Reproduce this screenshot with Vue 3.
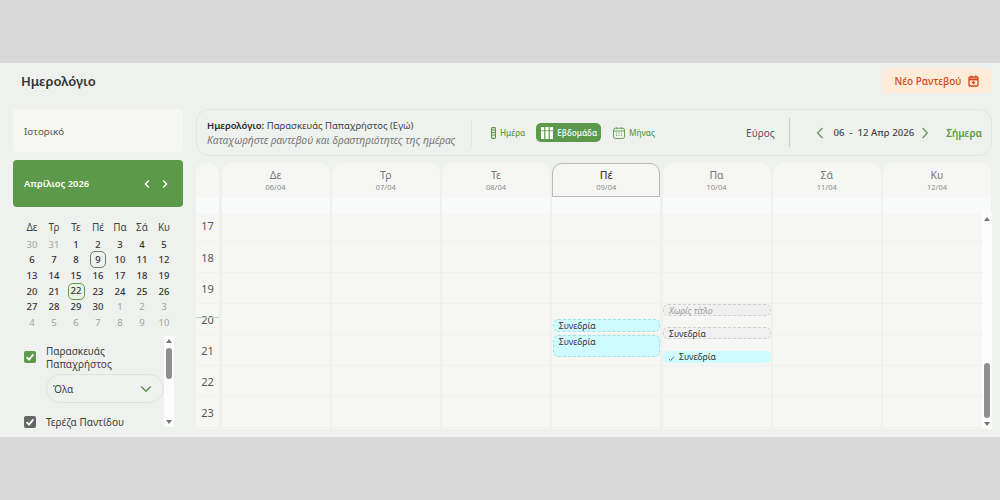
<script setup>
const dayNames = ['Δε', 'Τρ', 'Τε', 'Πέ', 'Πα', 'Σά', 'Κυ']

// μικρό ημερολόγιο
const monthDays = [
  [30, 31, 1, 2, 3, 4, 5],
  [6, 7, 8, 9, 10, 11, 12],
  [13, 14, 15, 16, 17, 18, 19],
  [20, 21, 22, 23, 24, 25, 26],
  [27, 28, 29, 30, 1, 2, 3],
  [4, 5, 6, 7, 8, 9, 10],
]

const isOther = (rowIndex, day) => (rowIndex === 0 && day > 20) || (rowIndex >= 4 && day < 20)

const hours = [17, 18, 19, 20, 21, 22, 23]

const weekDays = [
  { name: 'Δε', date: '06/04', events: [] },
  { name: 'Τρ', date: '07/04', events: [] },
  { name: 'Τε', date: '08/04', events: [] },
  {
    name: 'Πέ',
    date: '09/04',
    current: true,
    events: [
      { title: 'Συνεδρία', top: 106, height: 13, kind: 'cyan dashed' },
      { title: 'Συνεδρία', top: 122, height: 22, kind: 'cyan dashed' },
    ],
  },
  {
    name: 'Πα',
    date: '10/04',
    events: [
      { title: 'Χωρίς τίτλο', top: 91, height: 12, kind: 'gray dashed italic' },
      { title: 'Συνεδρία', top: 114, height: 12, kind: 'gray dashed' },
      { title: 'Συνεδρία', top: 138, height: 12, kind: 'cyan', done: true },
    ],
  },
  { name: 'Σά', date: '11/04', events: [] },
  { name: 'Κυ', date: '12/04', events: [] },
]
</script>

<template>
  <div class="page">
    <header class="top">
      <h1>Ημερολόγιο</h1>
      <button class="new-btn">
        Νέο Ραντεβού
        <svg width="11" height="12" viewBox="0 0 11 12" fill="none" stroke="#d2491b" stroke-width="1.3">
          <rect x="1" y="2" width="9" height="9" rx="1" />
          <path d="M1 4.4h9" stroke-width="2" />
          <path d="M3.2 .4v2M7.8 .4v2M5.5 6v3.2M3.9 7.6h3.2" />
        </svg>
      </button>
    </header>

    <div class="content">
      <aside class="side">
        <div class="history">Ιστορικό</div>

        <div class="month-bar">
          <span>Απρίλιος 2026</span>
          <div class="month-arrows">
            <svg width="8" height="10" viewBox="0 0 8 10" fill="none" stroke="#fff" stroke-width="1.5"><path d="M5.8 1.5 2.4 5l3.4 3.5" /></svg>
            <svg width="8" height="10" viewBox="0 0 8 10" fill="none" stroke="#fff" stroke-width="1.5"><path d="M2.2 1.5 5.6 5 2.2 8.5" /></svg>
          </div>
        </div>

        <div class="mini-cal">
          <span v-for="d in dayNames" :key="d" class="mini-head">{{ d }}</span>
          <template v-for="(row, r) in monthDays" :key="r">
            <span
              v-for="(day, c) in row"
              :key="c"
              class="mini-day"
              :class="{
                other: isOther(r, day),
                selected: r === 1 && c === 3,
                today: r === 3 && c === 2,
              }"
            >{{ day }}</span>
          </template>
        </div>

        <div class="filters">
          <div class="filter-list">
            <div class="filter-row">
              <span class="check green">
                <svg width="10" height="10" viewBox="0 0 10 10" fill="none" stroke="#fff" stroke-width="1.8"><path d="M1.6 5.2 4 7.6 8.4 2.4" /></svg>
              </span>
              <span class="filter-name">Παρασκευάς<br />Παπαχρήστος</span>
            </div>
            <div class="select">
              <span>Όλα</span>
              <svg width="12" height="8" viewBox="0 0 12 8" fill="none" stroke="#5d994b" stroke-width="1.5"><path d="M1.2 1.5 6 6.2l4.8-4.7" /></svg>
            </div>
            <div class="filter-row second">
              <span class="check dark">
                <svg width="10" height="10" viewBox="0 0 10 10" fill="none" stroke="#fff" stroke-width="1.8"><path d="M1.6 5.2 4 7.6 8.4 2.4" /></svg>
              </span>
              <span class="filter-name">Τερέζα Παντίδου</span>
            </div>
          </div>
          <div class="scrollbar small">
            <span class="tri up"></span>
            <span class="thumb"></span>
            <span class="tri down"></span>
          </div>
        </div>
      </aside>

      <main class="main">
        <div class="toolbar">
          <div class="cal-info">
            <div><b>Ημερολόγιο:</b> Παρασκευάς Παπαχρήστος (Εγώ)</div>
            <div class="hint">Καταχωρήστε ραντεβού και δραστηριότητες της ημέρας</div>
          </div>
          <span class="divider"></span>
          <div class="views">
            <span class="view">
              <svg width="5" height="12" viewBox="0 0 5 12" fill="none" stroke="#5d994b" stroke-width="1.1">
                <rect x=".6" y=".6" width="3.8" height="10.8" rx=".6" />
                <path d="M.6 3h3.8M.6 5.5h3.8M.6 8h3.8" />
              </svg>
              Ημέρα
            </span>
            <span class="view active">
              <svg width="12" height="12" viewBox="0 0 12 12" fill="#fff">
                <rect x="0" y="0" width="3.2" height="3.4" />
                <rect x="4.4" y="0" width="3.2" height="3.4" />
                <rect x="8.8" y="0" width="3.2" height="3.4" />
                <rect x="0" y="4.2" width="3.2" height="7.8" />
                <rect x="4.4" y="4.2" width="3.2" height="7.8" />
                <rect x="8.8" y="4.2" width="3.2" height="7.8" />
              </svg>
              Εβδομάδα
            </span>
            <span class="view">
              <svg width="12" height="12" viewBox="0 0 12 12" fill="none" stroke="#5d994b" stroke-width=".9">
                <rect x=".5" y="1.2" width="11" height="10.3" rx="1.8" />
                <path d="M.5 4h11M3.4 .3v1.8M8.6 .3v1.8M3 6h1M5.5 6h1M8 6h1M3 8.4h1M5.5 8.4h1M8 8.4h1" />
              </svg>
              Μήνας
            </span>
          </div>
          <span class="range-label">Εύρος</span>
          <span class="divider tall"></span>
          <div class="range">
            <svg class="range-prev" width="8" height="12" viewBox="0 0 8 12" fill="none" stroke="#5d994b" stroke-width="1.2"><path d="M6.4 1 1.6 6l4.8 5" /></svg>
            <span class="range-text">06 &nbsp;-&nbsp; 12 Απρ 2026</span>
            <svg width="8" height="12" viewBox="0 0 8 12" fill="none" stroke="#5d994b" stroke-width="1.2"><path d="M1.6 1l4.8 5-4.8 5" /></svg>
          </div>
          <span class="today-link">Σήμερα</span>
        </div>

        <div class="grid">
          <div class="time-col">
            <div class="col-head"></div>
            <div class="all-day"></div>
            <div class="rows">
              <div v-for="h in hours" :key="h" class="time-row">{{ h }}</div>
              <span class="now-line"></span>
            </div>
          </div>

          <div v-for="day in weekDays" :key="day.date" class="day-col">
            <div class="col-head" :class="{ current: day.current }">
              <span class="day-name">{{ day.name }}</span>
              <span class="day-date">{{ day.date }}</span>
            </div>
            <div class="all-day"></div>
            <div class="rows">
              <div v-for="h in hours" :key="h" class="hour-row"></div>
              <div
                v-for="(ev, i) in day.events"
                :key="i"
                class="event"
                :class="ev.kind"
                :style="{ top: ev.top + 'px', height: ev.height + 'px' }"
              >
                <svg v-if="ev.done" width="7" height="7" viewBox="0 0 8 8" fill="none" stroke="#777" stroke-width="1.1"><path d="M1 4.4 3 6.4 7 1.6" /></svg>
                {{ ev.title }}
              </div>
            </div>
          </div>

          <div class="scrollbar big">
            <span class="tri up"></span>
            <span class="thumb"></span>
            <span class="tri down"></span>
          </div>
        </div>
      </main>
    </div>
  </div>
</template>

<style>
html,
body {
  background: #d9d9d9;
}
</style>

<style scoped>
.page {
  margin-top: 63px;
  width: 1000px;
  height: 374px;
  background: #eff1ef;
  font-family: "Noto Sans", "Open Sans", sans-serif;
  color: #3d3d3d;
  overflow: hidden;
}

.top {
  height: 46px;
  display: flex;
  justify-content: space-between;
  align-items: flex-start;
  padding: 5px 8px 0 21px;
  box-sizing: border-box;
}

h1 {
  margin: 3px 0 0;
  font-size: 13px;
  line-height: 20px;
  font-weight: 600;
  color: #333;
}

.new-btn {
  width: 110px;
  height: 25px;
  border: none;
  border-radius: 6px;
  background: #ffecd8;
  color: #d2491b;
  font: 500 10px "Noto Sans", sans-serif;
  display: flex;
  align-items: center;
  justify-content: center;
  gap: 7px;
  padding: 0;
}

.content {
  display: flex;
  padding-left: 13px;
  gap: 13px;
}

/* αριστερή στήλη */
.side {
  width: 170px;
  flex: none;
}

.history {
  height: 43px;
  line-height: 45px;
  padding-left: 11px;
  background: #f6f7f5;
  border-radius: 4px;
  font-size: 9.8px;
  color: #555;
}

.month-bar {
  margin-top: 8px;
  height: 47px;
  background: #5d994b;
  border-radius: 4px;
  color: #fff;
  font-size: 9.4px;
  font-weight: 600;
  display: flex;
  align-items: center;
  justify-content: space-between;
  padding: 0 14px 0 11px;
}

.month-arrows {
  display: flex;
  gap: 10px;
}

.mini-cal {
  margin: 11px 0 0 8px;
  display: grid;
  grid-template-columns: repeat(7, 22px);
  grid-template-rows: 18.6px;
  grid-auto-rows: 15.6px;
  justify-items: center;
  align-items: center;
  font-size: 9.5px;
}

.mini-head {
  color: #444;
  font-size: 10px;
  line-height: 18px;
}

.mini-day {
  width: 16px;
  height: 15px;
  line-height: 15px;
  text-align: center;
  font-weight: 500;
  color: #333;
  border-radius: 5px;
  box-sizing: border-box;
}

.mini-day.other {
  color: #a3a5a3;
  font-weight: 400;
}

.mini-day.selected {
  height: 17px;
  border: 1px solid #777;
  line-height: 15px;
}

.mini-day.today {
  width: 17px;
  height: 17px;
  border: 1.5px solid #5d994b;
  background: #e9f4e4;
  line-height: 14px;
}

.filters {
  margin: 6px 9px 0 0;
  height: 91px;
  display: flex;
  justify-content: space-between;
}

.filter-list {
  padding: 8px 0 0 11px;
  width: 151px;
  box-sizing: border-box;
}

.filter-row {
  display: flex;
  align-items: center;
  gap: 10px;
  font-size: 10px;
  line-height: 13px;
}

.filter-name {
  position: relative;
  top: 1px;
}

.filter-row.second {
  margin-top: 12px;
}

.check {
  width: 12px;
  height: 12px;
  border-radius: 2px;
  display: flex;
  align-items: center;
  justify-content: center;
  flex: none;
}

.check.green {
  background: #5d994b;
}

.check.dark {
  background: #666;
}

.select {
  margin: 4px 0 0 22px;
  width: 118px;
  height: 29px;
  box-sizing: border-box;
  border: 1px solid #e0e3e0;
  border-radius: 15px;
  font-size: 10px;
  display: flex;
  align-items: center;
  justify-content: space-between;
  padding: 0 11px 0 6px;
}

/* scrollbars */
.scrollbar {
  background: #fbfcfb;
  width: 10px;
  flex: none;
  display: flex;
  flex-direction: column;
  align-items: center;
  box-sizing: border-box;
}

.thumb {
  width: 6px;
  background: #8f8f8f;
  border-radius: 3px;
}

.tri {
  width: 0;
  height: 0;
  border-left: 3.5px solid transparent;
  border-right: 3.5px solid transparent;
}

.tri.up {
  border-bottom: 4px solid #777;
}

.tri.down {
  border-top: 4px solid #777;
  margin-top: auto;
}

.scrollbar.small {
  padding: 3px 0;
}

.scrollbar.small .thumb {
  height: 31px;
  margin-top: 5px;
}

.scrollbar.big {
  position: absolute;
  right: 0;
  top: 50px;
  height: 216px;
  padding: 4px 0 3px;
}

.scrollbar.big .thumb {
  height: 55px;
  margin-top: auto;
  margin-bottom: 4px;
}

.scrollbar.big .tri.down {
  margin-top: 0;
}

/* κύρια περιοχή */
.main {
  width: 796px;
  flex: none;
}

.toolbar {
  height: 47px;
  box-sizing: border-box;
  border: 1px solid #e2e5e2;
  border-radius: 13px;
  display: flex;
  align-items: center;
  padding: 0 9px 0 10px;
  font-size: 9.5px;
}

.cal-info {
  width: 264px;
  line-height: 14px;
  color: #444;
  white-space: nowrap;
}

.cal-info b {
  font-weight: 600;
  color: #2c2c2c;
}

.hint {
  font-style: italic;
  font-size: 10.3px;
  color: #777;
}

.divider {
  width: 1px;
  height: 26px;
  background: #e2e5e2;
  flex: none;
}

.divider.tall {
  height: 29px;
  background: #c9cbc9;
  margin: 0 26px 0 14px;
}

.views {
  display: flex;
  align-items: center;
  margin-left: 19px;
  color: #5d994b;
  font-size: 8.2px;
  font-weight: 500;
}

.view {
  display: flex;
  align-items: center;
  gap: 4px;
  height: 19px;
  margin-right: 11px;
  white-space: nowrap;
}

.view.active {
  background: #5d994b;
  color: #fff;
  border-radius: 5px;
  padding: 0 4px 0 5px;
  margin-right: 12px;
}

.range-label {
  margin-left: auto;
  color: #555;
  font-size: 10px;
}

.range {
  display: flex;
  align-items: center;
  gap: 7px;
}

.range-prev {
  margin-right: 3px;
}

.range-text {
  color: #444;
  font-size: 9.6px;
  font-weight: 500;
  white-space: nowrap;
}

.today-link {
  margin-left: 17px;
  color: #5d994b;
  font-weight: 600;
  font-size: 10px;
}

.grid {
  position: relative;
  margin-top: 7px;
  display: flex;
  gap: 2.25px;
  height: 266px;
  overflow: hidden;
}

.time-col {
  width: 23.25px;
  flex: none;
}

.day-col {
  width: 108px;
  flex: none;
}

.col-head {
  height: 34px;
  box-sizing: border-box;
  background: #f6f7f5;
  border-radius: 10px 10px 0 0;
  display: flex;
  flex-direction: column;
  align-items: center;
  padding-top: 5px;
}

.col-head.current {
  border: 1px solid #b9bbb9;
  padding-top: 4px;
}

.col-head.current .day-name {
  color: #444;
  font-weight: 500;
}

.day-name {
  font-size: 10.5px;
  line-height: 14px;
  color: #777;
}

.day-date {
  font-size: 7.5px;
  line-height: 11px;
  color: #8a8a8a;
}

.all-day {
  height: 16px;
  background: #f9fafa;
}

.rows {
  position: relative;
  background: #f6f7f5;
  height: 216px;
  overflow: hidden;
}

.time-row,
.hour-row {
  height: 31px;
  box-sizing: border-box;
  border-bottom: 1px solid #eff1ef;
}

.time-row:first-child,
.hour-row:first-child {
  height: 29px;
}

.time-row {
  font-size: 11px;
  color: #555;
  text-align: center;
  line-height: 31px;
}

.time-row:first-child {
  line-height: 26px;
}

.now-line {
  position: absolute;
  left: 0;
  right: 0;
  top: 104px;
  height: 1px;
  background: #bcd9b2;
}

.event {
  position: absolute;
  left: 0.5px;
  right: 0;
  box-sizing: border-box;
  border-radius: 5px;
  font-size: 8.7px;
  line-height: 13px;
  color: #333;
  padding: 0 5px;
  white-space: nowrap;
  display: flex;
  align-items: flex-start;
  gap: 4px;
}

.event svg {
  margin-top: 4px;
}

.event.cyan {
  background: #cffafe;
}

.event.gray {
  background: #f0f0f0;
}

.event.dashed {
  border: 1px dashed #d0d2d0;
}

.event.cyan.dashed {
  border-color: #a8e2e5;
}

.event.italic {
  font-style: italic;
  color: #999;
}
</style>
